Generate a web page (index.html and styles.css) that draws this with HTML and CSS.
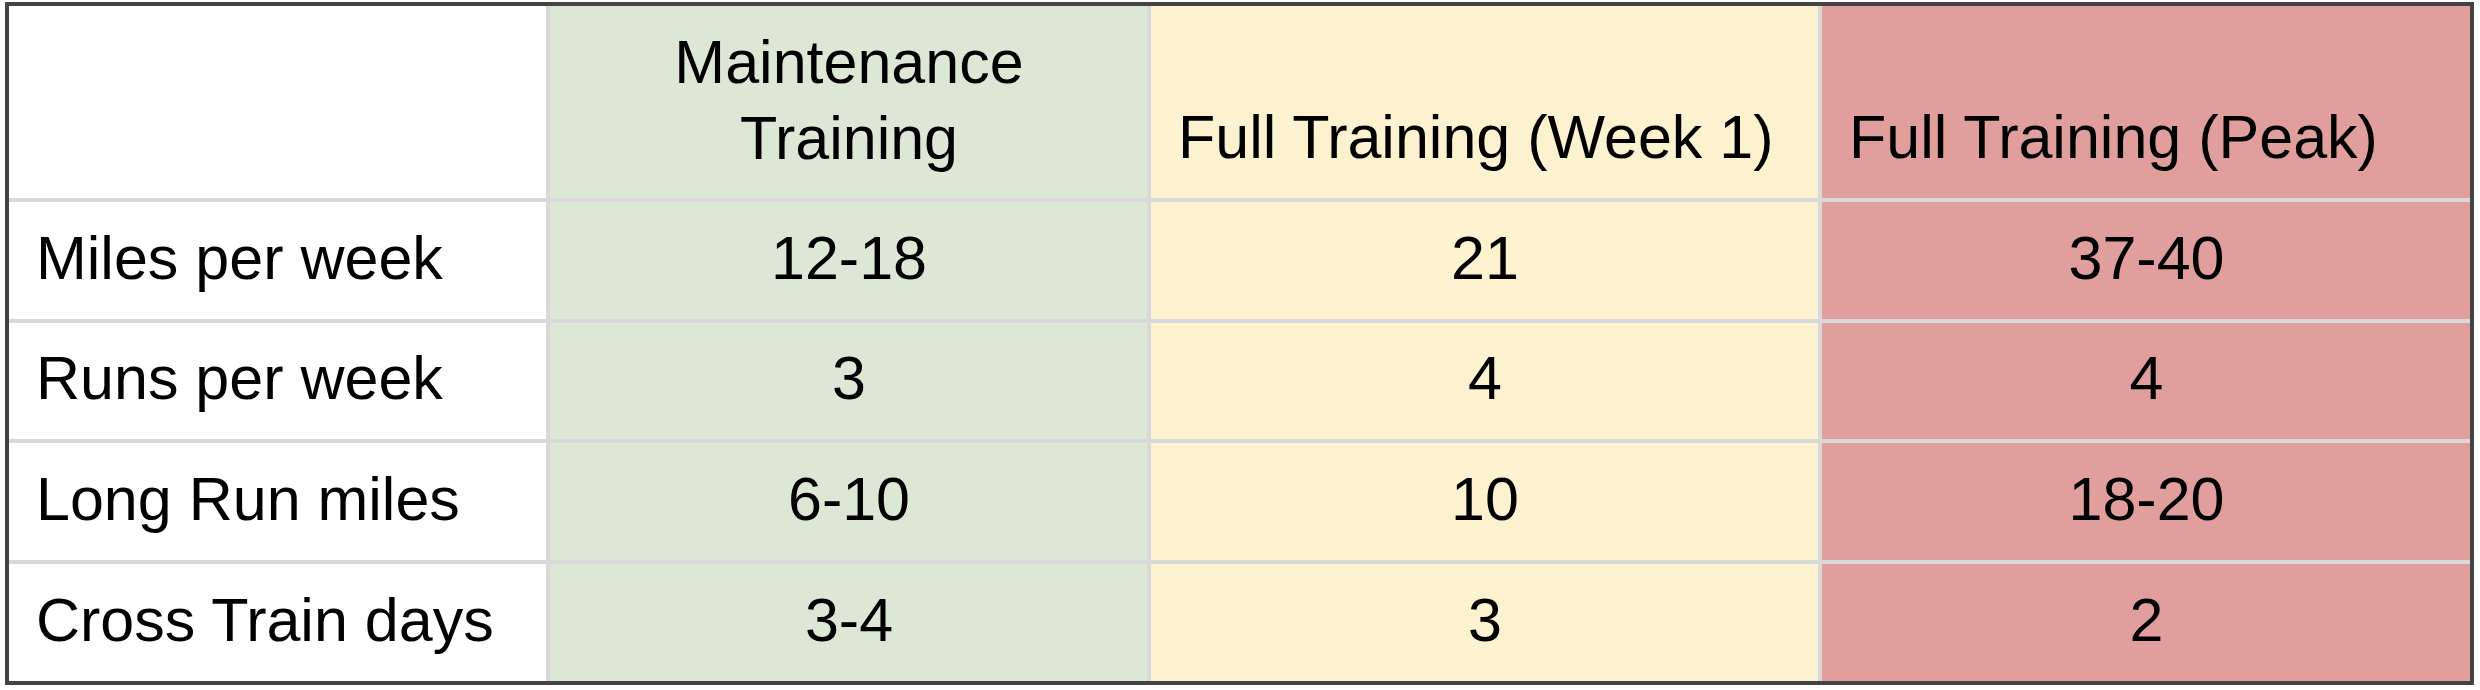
FILE: index.html
```html
<!DOCTYPE html>
<html>
<head>
<meta charset="utf-8">
<link rel="stylesheet" href="styles.css">
</head>
<body>
<div class="sheet">
  <div class="cell label"></div>
  <div class="cell green center wrap">Maintenance<br>Training</div>
  <div class="cell yellow head">Full Training (Week 1)</div>
  <div class="cell red head">Full Training (Peak)</div>

  <div class="cell label">Miles per week</div>
  <div class="cell green center">12-18</div>
  <div class="cell yellow center">21</div>
  <div class="cell red center">37-40</div>

  <div class="cell label">Runs per week</div>
  <div class="cell green center">3</div>
  <div class="cell yellow center">4</div>
  <div class="cell red center">4</div>

  <div class="cell label">Long Run miles</div>
  <div class="cell green center">6-10</div>
  <div class="cell yellow center">10</div>
  <div class="cell red center">18-20</div>

  <div class="cell label">Cross Train days</div>
  <div class="cell green center">3-4</div>
  <div class="cell yellow center">3</div>
  <div class="cell red center">2</div>
</div>
</body>
</html>
```

FILE: styles.css
```css
html, body {
  margin: 0;
  padding: 0;
  background: #ffffff;
}

body {
  padding: 2px 0 0 5px;
  font-family: "Liberation Sans", Arial, sans-serif;
}

.sheet {
  display: grid;
  grid-template-columns: 537px 597px 667px 648px;
  grid-template-rows: 192px 117px 116px 117px 117px;
  gap: 4px;
  width: max-content;
  background: #d9d9d9;
  border: 4px solid #434343;
}

.cell {
  display: flex;
  align-items: flex-end;
  padding: 0 26px 26px 27px;
  font-size: 61px;
  line-height: 1.13;
  color: #000000;
  background: #ffffff;
  white-space: nowrap;
}

.label {
  justify-content: flex-start;
}

.head {
  justify-content: flex-start;
}

.center {
  justify-content: center;
  text-align: center;
}

.wrap {
  line-height: 76px;
  padding-bottom: 22px;
}

.green {
  background: #dce8d5;
}

.yellow {
  background: #fdf2cf;
}

.red {
  background: #e09e9d;
}
```
